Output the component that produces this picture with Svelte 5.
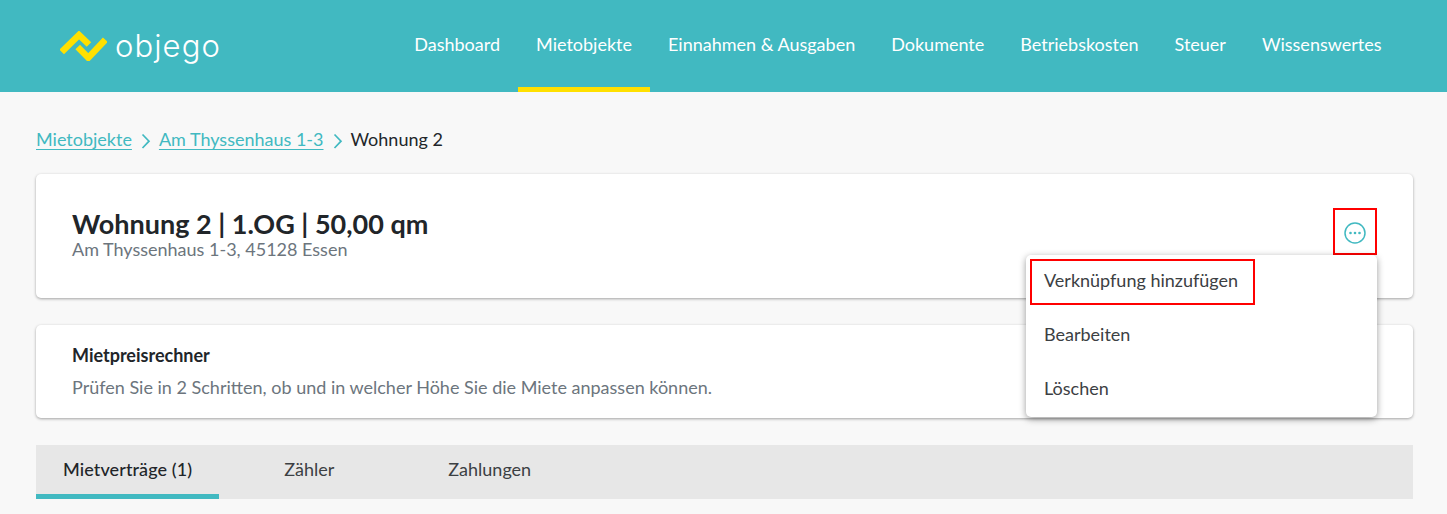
<script>
  const navItems = ["Dashboard", "Mietobjekte", "Einnahmen & Ausgaben", "Dokumente", "Betriebskosten", "Steuer", "Wissenswertes"];
  const tabs = ["Mietverträge (1)", "Zähler", "Zahlungen"];
</script>

<header class="topbar">
  <div class="logo">
    <svg width="47" height="30" viewBox="0 0 47 30" fill="none">
      <path d="M1.7 21 L19 4 L29 13.5" stroke="#ffe000" stroke-width="6.5" />
      <path d="M17.7 16 L28.3 26.7 L45.3 8.7" stroke="#ffe000" stroke-width="6.5" />
    </svg>
    <span class="wordmark">objego</span>
  </div>
  <nav class="nav">
    {#each navItems as item}
      <span class="nav-item" class:active={item === "Mietobjekte"}>{item}</span>
    {/each}
  </nav>
</header>

<main class="page">
  <div class="crumbs">
    <span class="crumb-link">Mietobjekte</span>
    <svg class="chev" width="10" height="16" viewBox="0 0 10 16"><path d="M1.5 1.5 L8 8.2 L1.5 15" fill="none" stroke="#41b9c1" stroke-width="1.7" /></svg>
    <span class="crumb-link">Am Thyssenhaus 1-3</span>
    <svg class="chev" width="10" height="16" viewBox="0 0 10 16"><path d="M1.5 1.5 L8 8.2 L1.5 15" fill="none" stroke="#41b9c1" stroke-width="1.7" /></svg>
    <span class="crumb-current">Wohnung 2</span>
  </div>

  <section class="card head-card">
    <div>
      <h1>Wohnung 2 | 1.OG | 50,00 qm</h1>
      <p class="address">Am Thyssenhaus 1-3, 45128 Essen</p>
    </div>
    <div class="more">
      <svg width="22" height="22" viewBox="0 0 22 22" fill="none">
        <circle cx="11" cy="11" r="10" stroke="#41b9c1" stroke-width="1.5" />
        <circle cx="6.5" cy="11" r="1.3" fill="#41b9c1" />
        <circle cx="11" cy="11" r="1.3" fill="#41b9c1" />
        <circle cx="15.5" cy="11" r="1.3" fill="#41b9c1" />
      </svg>
    </div>
    <div class="menu">
      <div class="menu-item marked">Verknüpfung hinzufügen</div>
      <div class="menu-item">Bearbeiten</div>
      <div class="menu-item">Löschen</div>
    </div>
  </section>

  <section class="card rent-card">
    <h2>Mietpreisrechner</h2>
    <p>Prüfen Sie in 2 Schritten, ob und in welcher Höhe Sie die Miete anpassen können.</p>
  </section>

  <div class="tabs">
    {#each tabs as tab, i}
      <span class="tab" class:selected={i === 0}>{tab}</span>
    {/each}
  </div>
</main>

<style>
  :global(body) {
    background: #f8f8f8;
    font-family: Lato, sans-serif;
    overflow: hidden;
  }
  .topbar {
    height: 92px;
    background: #41b9c1;
    display: flex;
    justify-content: space-between;
    padding: 0 47.5px 0 60px;
  }
  .logo {
    display: flex;
    align-items: center;
    gap: 8px;
    padding-bottom: 1px;
  }
  .wordmark {
    color: #fff;
    font-family: Inter, sans-serif;
    font-size: 31px;
    font-weight: 300;
    letter-spacing: 1.1px;
    line-height: 1;
  }
  .nav {
    display: flex;
  }
  .nav-item {
    padding: 0 18px;
    color: #fff;
    font-size: 18px;
    line-height: 88px;
    height: 92px;
    box-sizing: border-box;
    border-bottom: 5px solid transparent;
  }
  .nav-item.active {
    border-bottom-color: #ffe000;
  }
  .page {
    padding: 35px 34px 0 36px;
  }
  .crumbs {
    display: flex;
    align-items: center;
    height: 24px;
    font-size: 18px;
    margin-bottom: 23px;
  }
  .crumb-link {
    color: #41b9c1;
    text-decoration: underline;
    text-underline-offset: 3px;
  }
  .crumb-current {
    color: #22262a;
  }
  .chev {
    margin: 4px 8px 0 9px;
  }
  .card {
    background: #fff;
    border-radius: 5px;
    box-shadow: 0 1px 3px rgba(0, 0, 0, 0.35);
    box-sizing: border-box;
  }
  .head-card {
    height: 124px;
    position: relative;
    padding: 35px 36px 0;
  }
  h1 {
    margin: 0;
    font-size: 27px;
    font-weight: 700;
    line-height: 30px;
    color: #212529;
  }
  .address {
    margin: 0;
    font-size: 18px;
    line-height: 20px;
    color: #6c757d;
  }
  .more {
    position: absolute;
    top: 34px;
    right: 36px;
    width: 44px;
    height: 47px;
    box-sizing: border-box;
    border: 2px solid #f00;
    display: flex;
    align-items: center;
    justify-content: center;
    padding-top: 2px;
  }
  .menu {
    position: absolute;
    top: 81px;
    right: 36px;
    width: 351px;
    height: 162px;
    background: #fff;
    border-radius: 5px;
    box-shadow: 0 2px 7px rgba(0, 0, 0, 0.4);
    z-index: 2;
  }
  .menu-item {
    height: 54px;
    padding-left: 18px;
    font-size: 18px;
    line-height: 50px;
    color: #3c4043;
  }
  .marked {
    position: relative;
  }
  .marked::after {
    content: "";
    position: absolute;
    left: 4px;
    top: 4px;
    width: 225px;
    height: 46px;
    box-sizing: border-box;
    border: 2px solid #f00;
  }
  .rent-card {
    height: 93px;
    margin-top: 27px;
    padding: 19px 36px 0;
  }
  h2 {
    margin: 0;
    font-size: 18px;
    font-weight: 700;
    line-height: 22px;
    color: #212529;
  }
  .rent-card p {
    margin: 10px 0 0;
    font-size: 18px;
    line-height: 22px;
    color: #6c757d;
  }
  .tabs {
    display: flex;
    height: 54px;
    margin-top: 27px;
    background: #e7e7e7;
  }
  .tab {
    box-sizing: border-box;
    padding: 0 27px;
    min-width: 183px;
    font-size: 18px;
    line-height: 48px;
    color: #3c4043;
  }
  .tab + .tab {
    min-width: 0;
    padding: 0 49px 0 65px;
  }
  .tab.selected {
    color: #212529;
    font-weight: 500;
    letter-spacing: 0.1px;
    border-bottom: 5px solid #41b9c1;
  }
</style>
